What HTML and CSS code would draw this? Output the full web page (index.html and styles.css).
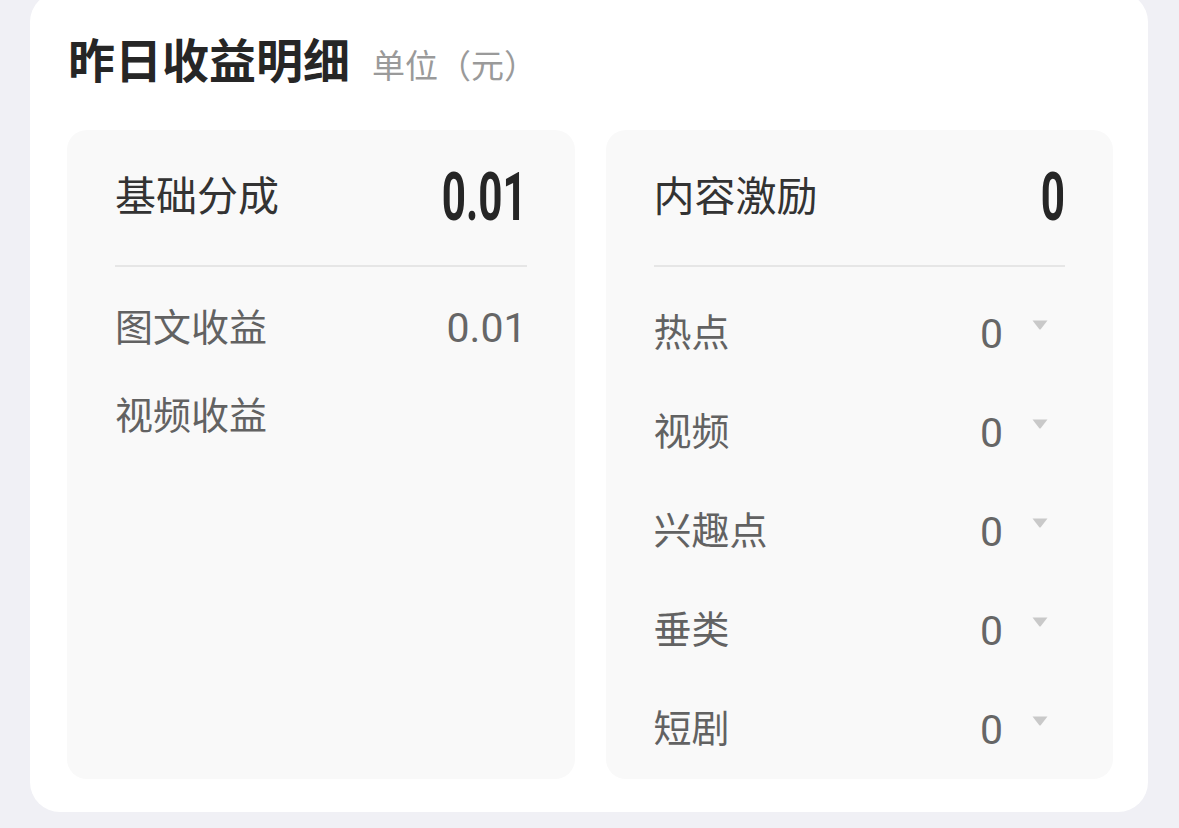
FILE: index.html
```html
<!DOCTYPE html>
<html lang="zh-CN">

<head>
    <meta charset="UTF-8">
    <meta name="viewport" content="width=device-width, initial-scale=1.0">
    <title>昨日收益明细</title>
    <link rel="stylesheet" href="styles.css">
</head>

<body>
    <div class="card">
        <div class="card-head">
            <h2 class="title">昨日收益明细</h2>
            <span class="unit">单位（元）</span>
        </div>
        <div class="panels">
            <div class="panel">
                <div class="panel-head">
                    <span class="panel-name">基础分成</span>
                    <span class="total"><span>0.01</span></span>
                </div>
                <div class="rows">
                    <div class="row">
                        <span class="label">图文收益</span>
                        <span class="num">0.01</span>
                    </div>
                    <div class="row">
                        <span class="label">视频收益</span>
                    </div>
                </div>
            </div>
            <div class="panel">
                <div class="panel-head">
                    <span class="panel-name">内容激励</span>
                    <span class="total"><span>0</span></span>
                </div>
                <div class="rows">
                    <div class="row tall">
                        <span class="label">热点</span>
                        <span class="num">0</span>
                        <svg class="caret" viewBox="0 0 16 10"><path d="M0.5 0.5h15l-6.6 8.6a1.2 1.2 0 0 1-1.8 0z"/></svg>
                    </div>
                    <div class="row tall">
                        <span class="label">视频</span>
                        <span class="num">0</span>
                        <svg class="caret" viewBox="0 0 16 10"><path d="M0.5 0.5h15l-6.6 8.6a1.2 1.2 0 0 1-1.8 0z"/></svg>
                    </div>
                    <div class="row tall">
                        <span class="label">兴趣点</span>
                        <span class="num">0</span>
                        <svg class="caret" viewBox="0 0 16 10"><path d="M0.5 0.5h15l-6.6 8.6a1.2 1.2 0 0 1-1.8 0z"/></svg>
                    </div>
                    <div class="row tall">
                        <span class="label">垂类</span>
                        <span class="num">0</span>
                        <svg class="caret" viewBox="0 0 16 10"><path d="M0.5 0.5h15l-6.6 8.6a1.2 1.2 0 0 1-1.8 0z"/></svg>
                    </div>
                    <div class="row tall">
                        <span class="label">短剧</span>
                        <span class="num">0</span>
                        <svg class="caret" viewBox="0 0 16 10"><path d="M0.5 0.5h15l-6.6 8.6a1.2 1.2 0 0 1-1.8 0z"/></svg>
                    </div>
                </div>
            </div>
        </div>
    </div>
</body>

</html>
```

FILE: styles.css
```css
body {
    margin: 0;
    background-color: #f0f0f5;
    font-family: "Noto Sans CJK SC", "Noto Sans", sans-serif;
    color: #333;
    overflow: hidden;
}

.card {
    box-sizing: border-box;
    width: 1118px;
    height: 820px;
    margin: -8px 0 0 30px;
    padding: 42px 35px 35px 37px;
    background-color: #fff;
    border-radius: 30px;
    display: flex;
    flex-direction: column;
}

.card-head {
    display: flex;
    align-items: baseline;
    margin-left: 1px;
    height: 48px;
    margin-bottom: 48px;
}

.title {
    margin: 0;
    font-size: 47px;
    line-height: 48px;
    font-weight: 700;
    color: #262626;
}

.unit {
    margin-left: 22px;
    font-size: 33px;
    color: #9a9a9a;
}

.panels {
    flex: 1;
    display: flex;
    gap: 31px;
}

.panel {
    flex: 1;
    background-color: #f9f9f9;
    border-radius: 20px;
    padding: 0 48px;
}

.panel-head {
    height: 135px;
    border-bottom: 2px solid #e6e6e6;
    display: flex;
    align-items: center;
    justify-content: space-between;
}

.panel-name {
    font-size: 41px;
    color: #333;
    padding-bottom: 10px;
}

.total {
    font-family: Roboto, "Liberation Sans", sans-serif;
    font-weight: 700;
    font-size: 66px;
    line-height: 1;
    color: #262626;
}

.total span {
    display: inline-block;
    transform: scaleX(0.64);
    transform-origin: right center;
}

.rows {
    padding-top: 17px;
}

.row {
    height: 88px;
    display: flex;
    align-items: center;
}

.row.tall {
    height: 99px;
}

.label {
    flex: 1;
    font-size: 38px;
    color: #626262;
    padding-bottom: 8px;
}

.num {
    font-family: Roboto, "Liberation Sans", sans-serif;
    font-size: 41px;
    color: #666;
}

.caret {
    width: 16px;
    height: 10px;
    margin: 0 17px 0 29px;
    align-self: flex-start;
    margin-top: 36px;
    fill: #c9c9c9;
}
```
